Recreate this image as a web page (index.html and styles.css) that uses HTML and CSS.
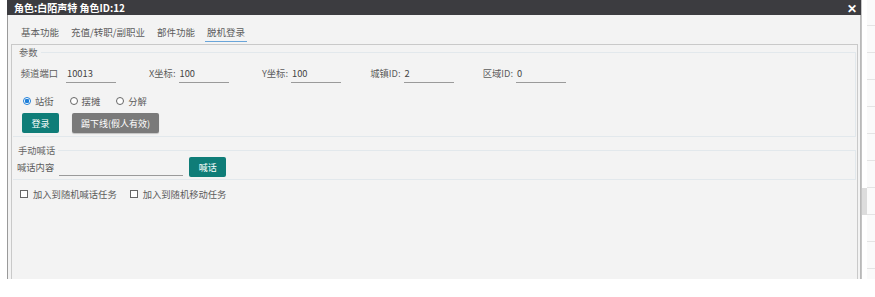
FILE: index.html
```html
<!DOCTYPE html>
<html lang="zh-CN">
<head>
    <meta charset="UTF-8">
    <title>角色:白陌声特 角色ID:12</title>
    <link rel="stylesheet" href="styles.css">
</head>
<body>
    <div class="page">
        <div class="gutter"></div>
        <div class="dialog">
            <div class="titlebar">
                <span class="title">角色:白陌声特 角色ID:12</span>
                <span class="close">✕</span>
            </div>
            <div class="dialog-body">
                <div class="tabs">
                    <span class="tab">基本功能</span>
                    <span class="tab">充值/转职/副职业</span>
                    <span class="tab">部件功能</span>
                    <span class="tab active">脱机登录</span>
                </div>
                <div class="panel">
                    <fieldset class="group params">
                        <legend>参数</legend>
                        <div class="field-row">
                            <label class="field first">频道端口<span class="input">10013</span></label>
                            <label class="field">X坐标:<span class="input">100</span></label>
                            <label class="field">Y坐标:<span class="input">100</span></label>
                            <label class="field">城镇ID:<span class="input">2</span></label>
                            <label class="field">区域ID:<span class="input">0</span></label>
                        </div>
                        <div class="radio-row">
                            <label class="radio checked"><span class="dot"></span>站街</label>
                            <label class="radio"><span class="dot"></span>摆摊</label>
                            <label class="radio"><span class="dot"></span>分解</label>
                        </div>
                        <div class="button-row">
                            <button class="btn teal">登录</button>
                            <button class="btn grey">踢下线(假人有效)</button>
                        </div>
                    </fieldset>
                    <fieldset class="group shout">
                        <legend>手动喊话</legend>
                        <div class="shout-row">
                            <span class="shout-label">喊话内容</span>
                            <span class="input wide"></span>
                            <button class="btn teal">喊话</button>
                        </div>
                    </fieldset>
                    <div class="check-row">
                        <label class="check"><span class="box"></span>加入到随机喊话任务</label>
                        <label class="check"><span class="box"></span>加入到随机移动任务</label>
                    </div>
                </div>
            </div>
        </div>
        <div class="side">
            <div class="scrollbar"><div class="thumb"></div></div>
            <div class="lines"></div>
        </div>
    </div>
</body>
</html>
```

FILE: styles.css
```css
body {
    margin: 0;
    background: #ffffff;
    font-family: "Noto Sans CJK SC", "Microsoft YaHei", sans-serif;
    font-size: 9.3px;
    color: #5c5c5c;
}
.page {
    display: flex;
    height: 297px;
}
.gutter {
    width: 7px;
}
.dialog {
    width: 854px;
    height: 279px;
    display: flex;
    flex-direction: column;
}
.titlebar {
    height: 15px;
    background: #3c3c40;
    display: flex;
    align-items: center;
    justify-content: space-between;
    padding: 0 4px 0 7px;
}
.title {
    color: #ffffff;
    font-weight: 700;
    font-size: 10px;
    line-height: 15px;
}
.close {
    color: #ffffff;
    font-size: 12px;
    font-weight: 700;
    line-height: 15px;
}
.dialog-body {
    flex: 1;
    background: #f3f3f3;
    border-left: 1px solid #9a9a9a;
    border-right: 1px solid #b8b8b8;
    padding: 0 2px 0 3px;
    display: flex;
    flex-direction: column;
}
.tabs {
    height: 29px;
    box-sizing: border-box;
    display: flex;
    align-items: flex-end;
    padding: 0 0 2px 8px;
    gap: 8px;
}
.tab {
    font-size: 9.5px;
    line-height: 14px;
    padding: 0 2px 2px;
    border-bottom: 1px solid transparent;
}
.tab.active {
    border-bottom-color: #6aa5d9;
}
.panel {
    flex: 1;
    border: 1px solid #c9c9c9;
    border-bottom: none;
    padding: 0 1px;
}
.group {
    margin: 0;
    border: 1px solid #e2e8ec;
    border-left: none;
    padding: 0;
    min-width: 0;
}
.group legend {
    padding: 0 3px 0 6px;
    font-size: 9.3px;
    color: #666666;
    line-height: 14px;
}
.field-row {
    display: grid;
    grid-template-columns: 103px repeat(4, 112.5px);
    padding-top: 7px;
}
.field {
    display: flex;
    justify-content: flex-end;
    align-items: flex-start;
    gap: 3px;
    line-height: 14px;
}
.field.first {
    gap: 8px;
}
.input {
    display: inline-block;
    width: 49px;
    height: 14px;
    line-height: 14px;
    padding: 0 0 2px 1px;
    border-bottom: 1px solid #9a9a9a;
    color: #444444;
}
.input.wide {
    width: 123px;
    margin: 0 6px 0 5px;
}
.radio-row {
    display: flex;
    gap: 16px;
    margin-top: 11px;
    padding-left: 10px;
    height: 14px;
    align-items: center;
}
.radio {
    display: flex;
    align-items: center;
    gap: 4px;
}
.radio .dot {
    width: 6px;
    height: 6px;
    border: 1px solid #666666;
    border-radius: 50%;
    background: #ffffff;
}
.radio.checked .dot {
    border-color: #1f7fd8;
    background: radial-gradient(circle, #1f7fd8 0 2px, #ffffff 2.5px);
}
.button-row {
    display: flex;
    gap: 13px;
    margin-top: 5px;
    padding: 0 0 3px 9px;
}
.btn {
    height: 20px;
    border: none;
    border-radius: 2px;
    color: #ffffff;
    font-family: inherit;
    font-size: 9px;
    padding: 0;
    cursor: pointer;
}
.btn.teal {
    background: #0f7d78;
    width: 37px;
}
.btn.grey {
    background: #7a7a7a;
    width: 87px;
    box-shadow: 0 1px 1px rgba(0,0,0,0.2);
}
.shout {
    margin-top: 6px;
}
.shout legend {
    padding-left: 5px;
}
.shout-row {
    display: flex;
    align-items: center;
    padding: 0 0 2px 4px;
    margin-top: 0;
    height: 20px;
}
.check-row {
    display: flex;
    gap: 13px;
    padding: 7px 0 0 7px;
    line-height: 14px;
}
.check {
    display: flex;
    align-items: center;
    gap: 5px;
}
.check .box {
    width: 6px;
    height: 6px;
    border: 1px solid #666666;
    background: #ffffff;
}
.side {
    flex: 1;
    display: flex;
    height: 279px;
}
.scrollbar {
    width: 5px;
    border-left: 1px solid #c4c4c4;
    position: relative;
}
.thumb {
    position: absolute;
    top: 188px;
    left: 0;
    width: 5px;
    height: 27px;
    background: #dcdcdc;
}
.lines {
    flex: 1;
    background: repeating-linear-gradient(to bottom, #fafafa 0 25px, #e4e4e4 25px 26px, #fafafa 26px 27px);
}
```
